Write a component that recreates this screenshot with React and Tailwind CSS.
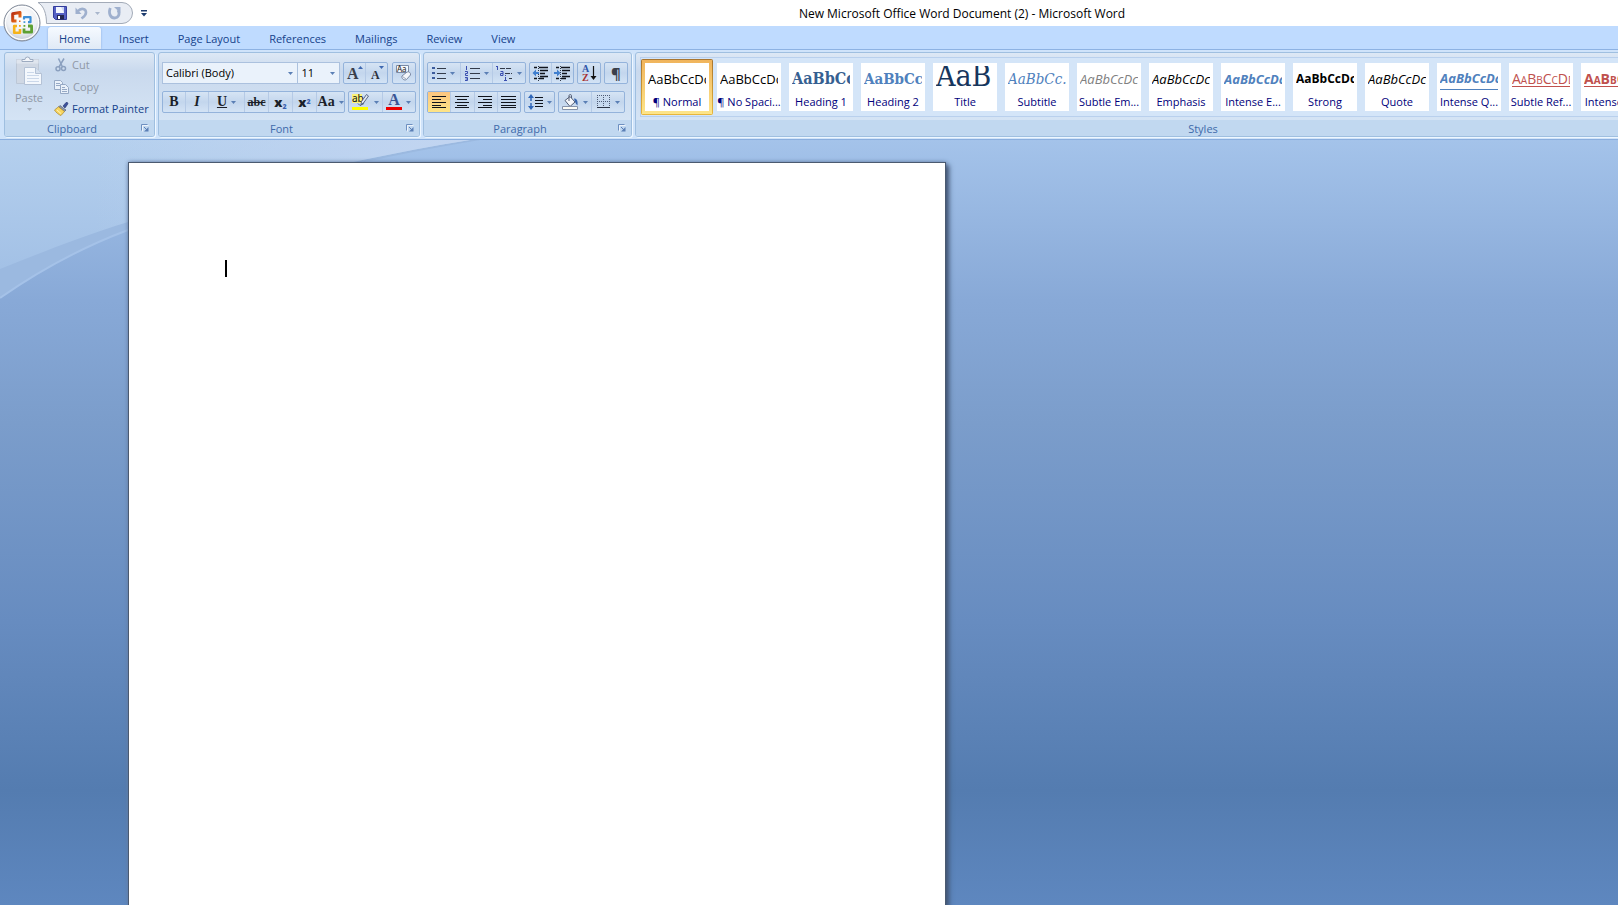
import { useState } from 'react';

const TABS = ['Home', 'Insert', 'Page Layout', 'References', 'Mailings', 'Review', 'View'];

const STYLES = [
  { name: '¶ Normal', sample: 'AaBbCcDc', look: 'text-[13px] leading-[22px] text-black' },
  { name: '¶ No Spaci...', sample: 'AaBbCcDc', look: 'text-[13px] leading-[22px] text-black' },
  { name: 'Heading 1', sample: 'AaBbCc', look: 'font-["DejaVu_Serif_Condensed","DejaVu_Serif",serif] font-bold text-[16px] leading-[22px] text-[#365f91]' },
  { name: 'Heading 2', sample: 'AaBbCc', look: 'font-["DejaVu_Serif_Condensed","DejaVu_Serif",serif] font-bold text-[15px] leading-[22px] text-[#4f81bd]' },
  { name: 'Title', sample: 'AaB', look: 'font-["DejaVu_Serif_Condensed","DejaVu_Serif",serif] text-[30px] leading-[28px] text-[#17365d]' },
  { name: 'Subtitle', sample: 'AaBbCc.', look: 'font-["DejaVu_Serif_Condensed","DejaVu_Serif",serif] italic text-[15px] leading-[22px] text-[#4f81bd]' },
  { name: 'Subtle Em...', sample: 'AaBbCcDc', look: 'italic text-[13px] leading-[22px] text-[#808080]' },
  { name: 'Emphasis', sample: 'AaBbCcDc', look: 'italic text-[13px] leading-[22px] text-black' },
  { name: 'Intense E...', sample: 'AaBbCcDc', look: 'italic font-bold text-[13px] leading-[22px] text-[#4f81bd]' },
  { name: 'Strong', sample: 'AaBbCcDc', look: 'font-bold text-[12px] leading-[22px] text-black' },
  { name: 'Quote', sample: 'AaBbCcDc', look: 'italic text-[13px] leading-[22px] text-black' },
  { name: 'Intense Q...', sample: 'AaBbCcDc', look: 'italic font-bold text-[13px] leading-[22px] text-[#4f81bd]', rule: true },
  { name: 'Subtle Ref...', sample: 'AaBbCcDd', look: '[font-variant:small-caps] underline underline-offset-2 text-[14px] leading-[22px] text-[#c0504d]' },
  { name: 'Intense R...', sample: 'AaBbCcDd', look: '[font-variant:small-caps] underline underline-offset-2 font-bold text-[14px] leading-[22px] text-[#c0504d]' },
];

function Caret({ className = 'text-[#5a7fb5]' }) {
  return (
    <svg width="5" height="3" viewBox="0 0 5 3" className={`shrink-0 ${className}`} fill="currentColor">
      <path d="M0 0h5L2.500 3z" />
    </svg>
  );
}

function OfficeLogo() {
  return (
    <svg width="38" height="38" viewBox="0 0 38 38">
      <defs>
        <radialGradient id="orb" cx="50%" cy="35%" r="70%">
          <stop offset="0" stopColor="#ffffff" />
          <stop offset="0.6" stopColor="#eef0f4" />
          <stop offset="1" stopColor="#b4bdcc" />
        </radialGradient>
        <linearGradient id="logoRed" x1="0" y1="0" x2="1" y2="1">
          <stop offset="0" stopColor="#b92d12" />
          <stop offset="1" stopColor="#f07a1c" />
        </linearGradient>
      </defs>
      <circle cx="19" cy="19" r="18" fill="url(#orb)" stroke="#7e8796" />
      <circle cx="19" cy="19" r="16.500" fill="none" stroke="#ffffff" strokeWidth="1.200" />
      <path d="M13.500 17H9.700V9.800l7.300-1.300v5" fill="none" stroke="url(#logoRed)" strokeWidth="3" strokeLinejoin="round" />
      <path d="M21 15.500v-2.300h6.500v5H25" fill="none" stroke="#3d8fd6" strokeWidth="2.200" strokeLinejoin="round" />
      <path d="M21 24.500v3.700h7.600V22H25" fill="none" stroke="#5da033" strokeWidth="2.800" strokeLinejoin="round" />
      <path d="M14 22h-2.800v6.800H17V25" fill="none" stroke="#f6b31a" strokeWidth="2.600" strokeLinejoin="round" />
      <path d="M16 16.500h1.500v1.500H16z" fill="#e8641c" />
      <path d="M20.500 17.200h1.800v1.800h-1.800z" fill="#4a98dc" />
      <path d="M16 21h1.800v1.800H16z" fill="#f2a21a" />
      <path d="M20.500 21h1.800v1.800h-1.800z" fill="#62a838" />
    </svg>
  );
}

function SaveIcon() {
  return (
    <svg width="14" height="14" viewBox="0 0 14 14">
      <path d="M0.500 0.500h13v13h-11l-2-2z" fill="#5560c4" stroke="#333c9c" />
      <path d="M3 1h8v6H3z" fill="#f3f6ff" />
      <path d="M8 1h3v6z" fill="#cdd6f4" />
      <path d="M4 9h7v4.500H4z" fill="#23264f" />
      <path d="M5 10h2v3H5z" fill="#ffffff" />
    </svg>
  );
}

function UndoIcon() {
  return (
    <svg width="13" height="14" viewBox="0 0 13 14" fill="none">
      <path d="M3 5C6 1.500 11 2.500 11 6.500c0 3-2.500 4.500-4.500 6" stroke="#9fb0ce" strokeWidth="2.600" />
      <path d="M0.500 1.500v6.500h6z" fill="#9fb0ce" />
    </svg>
  );
}

function RedoIcon() {
  return (
    <svg width="13" height="14" viewBox="0 0 13 14" fill="none">
      <path d="M2.300 2C0 8 3 12 6.500 12s6-3.500 3.500-8" stroke="#9fb0ce" strokeWidth="2.800" />
      <path d="M6 1h6.500v6z" fill="#9fb0ce" />
    </svg>
  );
}

function PasteIcon() {
  return (
    <svg width="28" height="30" viewBox="0 0 28 30">
      <path d="M1.500 3.500h22v24h-22z" fill="#d0d8e4" stroke="#bcc7d6" />
      <path d="M1.500 3.500h22v4h-22z" fill="#dfe5ee" />
      <path d="M7 5.500V3.500h3a2.500 2.500 0 0 1 5 0h3v2z" fill="#f2f5fa" stroke="#9dabc0" />
      <path d="M9.500 11.500h11l6 6v11h-17z" fill="#f4f8fd" stroke="#b4c2d6" />
      <path d="M20.500 11.500v6h6" fill="#d5e0ee" stroke="#b4c2d6" />
      <path d="M12 16.500h7M12 19.500h12M12 22.500h12M12 25.500h12" stroke="#cbd8ea" />
    </svg>
  );
}

function CutIcon() {
  return (
    <svg width="14" height="14" viewBox="0 0 14 14" fill="none" stroke="#8ba0bf">
      <path d="M4.500 0.500L8.500 9M10 0.500L5 9" strokeWidth="1.500" />
      <circle cx="4" cy="10.800" r="2" strokeWidth="1.500" />
      <circle cx="9.500" cy="10.500" r="2" strokeWidth="1.500" />
    </svg>
  );
}

function CopyIcon() {
  return (
    <svg width="15" height="14" viewBox="0 0 15 14" fill="#eaf1fa" stroke="#96a9c5">
      <path d="M0.500 0.500h6l2 2v7h-8z" />
      <path d="M2 3.500h4M2 5.500h4" />
      <path d="M6.500 4.500h5l3 3v6h-8z" />
      <path d="M8 7.500h3M8 9.500h5M8 11.500h5" />
    </svg>
  );
}

function BrushIcon() {
  return (
    <svg width="15" height="14" viewBox="0 0 15 14">
      <path d="M9 4l3-3.500c1-.8 2.500.6 1.700 1.700L11 6z" fill="#3a4f9a" stroke="#273570" strokeWidth=".6" />
      <path d="M6 3.500l6 4.500-1.500 1.500L4.500 5z" fill="#8b96ad" stroke="#4d5568" strokeWidth=".6" />
      <path d="M4.500 4.800l6 4.700L7 13.500C5 13 1.500 10 .5 8z" fill="#f7d560" stroke="#a8842a" strokeWidth=".7" />
      <path d="M3 8l4 3.500" stroke="#fff3b8" />
    </svg>
  );
}

function LauncherIcon() {
  return (
    <svg width="8" height="8" viewBox="0 0 8 8" fill="none">
      <path d="M1.500 7.500v-6h6" stroke="#ffffff" opacity=".7" />
      <path d="M0.500 6.500v-6h6" stroke="#6d8fc0" />
      <path d="M3 3l3 3" stroke="#5b7fb5" />
      <path d="M7.500 3v4.500H3z" fill="#5b7fb5" />
    </svg>
  );
}

function GrowFontIcon() {
  return (
    <svg width="18" height="18" viewBox="0 0 18 18">
      <text x="1" y="15" fontSize="16" fontWeight="bold" fontFamily="Liberation Serif" fill="#3a3f4a">A</text>
      <path d="M12 5h5l-2.500-3z" fill="#3f68b0" />
    </svg>
  );
}

function ShrinkFontIcon() {
  return (
    <svg width="18" height="18" viewBox="0 0 18 18">
      <text x="3" y="15" fontSize="12" fontWeight="bold" fontFamily="Liberation Serif" fill="#2c313c">A</text>
      <path d="M11 2h5l-2.500 3z" fill="#3f68b0" />
    </svg>
  );
}

function ClearIcon() {
  return (
    <svg width="18" height="18" viewBox="0 0 18 18">
      <path d="M1.500 1.500h12v7h-12z" fill="#f6f9fd" stroke="#7b8ba6" />
      <text x="2" y="8" fontSize="8" fontFamily="Noto Sans" fill="#222">Aa</text>
      <path d="M7 12l5-4c2-.8 4 1 3.500 3l-4 4.500c-2 1.500-5.500-1-4.500-3.500z" fill="#f4f6fa" stroke="#6f7f9b" strokeWidth=".9" />
      <path d="M7.500 12.500l3.500 2.500" stroke="#9aa7be" />
    </svg>
  );
}

function HighlightIcon() {
  return (
    <svg width="18" height="18" viewBox="0 0 18 18">
      <path d="M0 1h10v9H0z" fill="#fbf37a" />
      <text x="0" y="9" fontSize="10" fontFamily="Noto Sans" fill="#111">ab</text>
      <path d="M14.500 1.500l2 1.500-5 7-2.500 1.500.500-3z" fill="#e4e9f2" stroke="#4b5a78" strokeWidth=".9" />
      <path d="M6 10.500l2 2 4-2" stroke="#4b5a78" fill="none" />
      <path d="M0 14h16v3H0z" fill="#ffff00" />
    </svg>
  );
}

function FontColorIcon() {
  return (
    <svg width="16" height="18" viewBox="0 0 16 18">
      <text x="8" y="12" fontSize="16" fontWeight="bold" textAnchor="middle" fontFamily="Liberation Serif" fill="#3a5596">A</text>
      <path d="M0 14h16v3H0z" fill="#ee0000" />
    </svg>
  );
}

function BulletsIcon() {
  return (
    <svg width="14" height="14" viewBox="0 0 14 14">
      <path d="M0 1h3v2H0zM0 6h3v2H0zM0 11h3v2H0z" fill="#3d5c9c" />
      <path d="M5 2.500h9M5 7.500h9M5 12.500h9" stroke="#333b4a" />
    </svg>
  );
}

function NumberingIcon() {
  return (
    <svg width="15" height="15" viewBox="0 0 15 15">
      <path d="M1.500 0v4M0 5.500h2.500v2H.5v2h2.500M0 11.500h2.500v3H0M0.500 13h2" fill="none" stroke="#3a4fb0" />
      <path d="M5 2.500h10M5 7.500h10M5 12.500h10" stroke="#333b4a" />
    </svg>
  );
}

function MultilevelIcon() {
  return (
    <svg width="17" height="15" viewBox="0 0 17 15">
      <path d="M1.500 0v4M0 .5h1.500M4.500 5.500h2.500v4H4.500v-2H7M9.500 11v3M8 14.500h3M9.500 9v1" fill="none" stroke="#3a4fb0" />
      <path d="M4 2.500h11M9 7.500h7M13 12.500h3" stroke="#333b4a" strokeDasharray="5 1" />
    </svg>
  );
}

function IndentIcon({ increase }) {
  return (
    <svg width="17" height="15" viewBox="0 0 17 15">
      <path d="M2 1.500h3M7 1.500h9M8 4.500h8M8 7.500h5M8 10.500h8M2 12.500h3M7 12.500h5" stroke="#10141c" strokeWidth="1.600" />
      <path d="M6.500 0v15" stroke="#333b4a" strokeDasharray="1 1" />
      <path d={increase ? 'M0 6h3V3.500l3.500 3.500L3 10.500V8H0z' : 'M7 6H4V3.500L.5 7 4 10.500V8h3z'} fill="#3f7fcf" />
    </svg>
  );
}

function SortIcon() {
  return (
    <svg width="17" height="18" viewBox="0 0 17 18">
      <text x="1" y="8" fontSize="10" fontWeight="bold" fontFamily="Liberation Serif" fill="#2f55a8">A</text>
      <text x="1" y="17" fontSize="10" fontWeight="bold" fontFamily="Liberation Serif" fill="#a83232">Z</text>
      <path d="M12.500 2v11" stroke="#111" strokeWidth="1.200" />
      <path d="M9.500 12h6l-3 4z" fill="#111" />
    </svg>
  );
}

function AlignIcon({ kind }) {
  const lines = {
    left: 'M0 .5h14M0 3.500h9M0 6.500h14M0 9.500h9M0 11.500h14',
    center: 'M0 .5h14M2 3.500h10M0 6.500h14M2 9.500h10M0 11.500h14',
    right: 'M0 .5h14M5 3.500h9M0 6.500h14M5 9.500h9M0 11.500h14',
    justify: 'M0 .5h15M0 3.500h15M0 6.500h15M0 9.500h15M0 11.500h15',
  };
  return (
    <svg width="15" height="12" viewBox="0 0 15 12" stroke="#10141c" strokeWidth="1.200">
      <path d={lines[kind]} />
    </svg>
  );
}

function SpacingIcon() {
  return (
    <svg width="15" height="16" viewBox="0 0 15 16">
      <path d="M3 0l3 4H0zM3 16l3-4H0z" fill="#2f66b8" />
      <path d="M3 3v4M3 9v4" stroke="#2f66b8" strokeWidth="1.500" />
      <path d="M7 3.500h8M7 6.500h8M7 9.500h8M7 12.500h8" stroke="#10141c" />
    </svg>
  );
}

function ShadingIcon() {
  return (
    <svg width="17" height="16" viewBox="0 0 17 16">
      <path d="M3 6.500l5-4 5 5.500-5 4.500z" fill="#f4f6fa" stroke="#545f76" />
      <path d="M7 7V1.500c0-1.200 2.500-1.200 2.500 0V4" fill="none" stroke="#545f76" />
      <path d="M12 4.500c3 0 4 2.500 3.500 7-1.500-1-2-3-2.500-3.500z" fill="#3a66ae" />
      <path d="M0.500 12.500h15v3h-15z" fill="#fdfdf6" stroke="#8592aa" />
    </svg>
  );
}

function BordersIcon() {
  return (
    <svg width="14" height="14" viewBox="0 0 14 14" fill="none" stroke="#4e5c76">
      <path d="M0.500 0v12M6.500 0v12M12.500 0v12M0 .5h13M0 6.500h13" strokeDasharray="1 1" />
      <path d="M0 12.500h13" stroke="#2b3446" />
    </svg>
  );
}

function Group({ label, className = '', launcher = true, children }) {
  return (
    <section
      aria-label={label}
      className={`flex h-[85px] shrink-0 flex-col overflow-hidden rounded-[3px] border border-[#9fbfe0] bg-linear-to-b from-[#dde8f5] from-0% via-[#c9d9ed] via-22% to-[#d8e7f7] to-100% shadow-[1px_1px_0_#eef7ff] ${className}`}
    >
      <div className="flex-1">{children}</div>
      <div className="flex h-[16px] items-center bg-[#c1d8f0] text-[11px] leading-[15px] text-[#3e6aaa]">
        <span className="flex-1 pt-px text-center">{label}</span>
        {launcher && (
          <button type="button" aria-label={`${label} options`} className="mr-[3px] flex h-3 w-3 items-center justify-center">
            <LauncherIcon />
          </button>
        )}
      </div>
    </section>
  );
}

function ButtonStrip({ className = '', children }) {
  return (
    <div className={`flex h-[22px] divide-x divide-[#b5cae6] rounded-[2px] border border-[#94b3db] bg-linear-to-b from-[#d6e4f4] from-0% via-[#c3d6ed] via-50% to-[#d3e3f5] to-100% ${className}`}>
      {children}
    </div>
  );
}

function Tool({ label, active, caret, className = 'flex-1', children }) {
  return (
    <button
      type="button"
      aria-label={label}
      className={`flex items-center justify-center gap-1 ${active ? 'bg-linear-to-b from-[#fbc580] to-[#fde486]' : ''} ${className}`}
    >
      {children}
      {caret && <Caret />}
    </button>
  );
}

function ComboBox({ label, value, options, onChange, className }) {
  return (
    <div className={`relative flex h-[22px] items-center border border-[#abc1de] bg-[#eaf2fb] ${className}`}>
      <select
        aria-label={label}
        value={value}
        onChange={(e) => onChange(e.target.value)}
        className="h-full w-full appearance-none bg-transparent pl-[3px] pt-px text-[11px] text-black outline-none"
      >
        {options.map((o) => <option key={o}>{o}</option>)}
      </select>
      <Caret className="pointer-events-none absolute right-1 text-[#5a7fb5]" />
    </div>
  );
}

function ClipboardGroup() {
  return (
    <Group label="Clipboard" className="w-[151px]">
      <div className="flex pt-px text-[11px]">
        <button type="button" className="ml-[3px] flex w-[42px] flex-col items-center pt-[2px] text-[#8f98a6]">
          <PasteIcon />
          <span className="mt-[4px] leading-4">Paste</span>
          <Caret className="mt-[2px] text-[#a3adbb]" />
        </button>
        <div className="ml-1 flex flex-col">
          <button type="button" className="flex h-[22px] items-center gap-1 text-[#8f98a6]">
            <CutIcon />Cut
          </button>
          <button type="button" className="flex h-[22px] items-center gap-1 text-[#8f98a6]">
            <CopyIcon />Copy
          </button>
          <button type="button" className="flex h-[22px] items-center gap-[3px] whitespace-nowrap text-[#15428b]">
            <BrushIcon />Format Painter
          </button>
        </div>
      </div>
    </Group>
  );
}

function FontGroup() {
  const [font, setFont] = useState('Calibri (Body)');
  const [size, setSize] = useState('11');

  return (
    <Group label="Font" className="w-[262px]">
      <div className="flex flex-col gap-[7px] px-[3px] pt-[9px]">
        <div className="flex">
          <ComboBox label="Font" value={font} onChange={setFont} options={['Calibri (Body)', 'Cambria (Headings)']} className="w-[137px]" />
          <ComboBox label="Font size" value={size} onChange={setSize} options={['10', '11', '12']} className="w-[42px] border-l-0" />
          <ButtonStrip className="ml-[3px] w-[45px]">
            <Tool label="Grow font"><GrowFontIcon /></Tool>
            <Tool label="Shrink font"><ShrinkFontIcon /></Tool>
          </ButtonStrip>
          <ButtonStrip className="ml-[4px] w-[24px]">
            <Tool label="Clear formatting"><ClearIcon /></Tool>
          </ButtonStrip>
        </div>
        <div className='flex font-["Liberation_Serif",serif] text-[#1b1f29]'>
          <ButtonStrip className="w-[184px]">
            <Tool label="Bold" className="w-[23px]"><b className="text-[14px] leading-5">B</b></Tool>
            <Tool label="Italic" className="w-[23px]"><i className="text-[14px] font-bold leading-5">I</i></Tool>
            <Tool label="Underline" caret className="w-[36px]"><b className="text-[14px] leading-5 underline">U</b></Tool>
            <Tool label="Strikethrough" className="w-[24px]"><b className="text-[12px] leading-5 line-through">abc</b></Tool>
            <Tool label="Subscript" className="w-[24px]">
              <span className='font-["Noto_Sans",sans-serif] text-[13px] font-black leading-4'>x<sub className="text-[7px] text-[#3a62b0]">2</sub></span>
            </Tool>
            <Tool label="Superscript" className="w-[24px]">
              <span className='font-["Noto_Sans",sans-serif] text-[13px] font-black leading-4'>x<sup className="text-[7px] text-[#3a62b0]">2</sup></span>
            </Tool>
            <Tool label="Change case" caret><b className="text-[14px] leading-5">Aa</b></Tool>
          </ButtonStrip>
          <ButtonStrip className="ml-[3px] w-[68px]">
            <Tool label="Highlight" caret><HighlightIcon /></Tool>
            <Tool label="Font color" caret><FontColorIcon /></Tool>
          </ButtonStrip>
        </div>
      </div>
    </Group>
  );
}

function ParagraphGroup() {
  return (
    <Group label="Paragraph" className="w-[209px]">
      <div className="flex flex-col gap-[7px] px-[3px] pt-[9px]">
        <div className="flex gap-[3px]">
          <ButtonStrip className="w-[99px]">
            <Tool label="Bullets" caret><BulletsIcon /></Tool>
            <Tool label="Numbering" caret><NumberingIcon /></Tool>
            <Tool label="Multilevel list" caret><MultilevelIcon /></Tool>
          </ButtonStrip>
          <ButtonStrip className="w-[45px]">
            <Tool label="Decrease indent"><IndentIcon /></Tool>
            <Tool label="Increase indent"><IndentIcon increase /></Tool>
          </ButtonStrip>
          <ButtonStrip className="w-[24px]">
            <Tool label="Sort"><SortIcon /></Tool>
          </ButtonStrip>
          <ButtonStrip className="w-[24px]">
            <Tool label="Show marks"><span className="text-[15px] font-bold leading-5 text-[#3a3f4a]">¶</span></Tool>
          </ButtonStrip>
        </div>
        <div className="flex gap-[3px]">
          <ButtonStrip className="w-[94px]">
            <Tool label="Align left" active><AlignIcon kind="left" /></Tool>
            <Tool label="Center"><AlignIcon kind="center" /></Tool>
            <Tool label="Align right"><AlignIcon kind="right" /></Tool>
            <Tool label="Justify"><AlignIcon kind="justify" /></Tool>
          </ButtonStrip>
          <ButtonStrip className="w-[31px]">
            <Tool label="Line spacing" caret><SpacingIcon /></Tool>
          </ButtonStrip>
          <ButtonStrip className="w-[67px]">
            <Tool label="Shading" caret><ShadingIcon /></Tool>
            <Tool label="Borders" caret><BordersIcon /></Tool>
          </ButtonStrip>
        </div>
      </div>
    </Group>
  );
}

function StyleTile({ style, selected, onSelect }) {
  return (
    <button
      type="button"
      onClick={onSelect}
      className={`flex h-14 w-[72px] shrink-0 rounded-[2px] p-px ${selected ? 'bg-linear-to-b from-[#a8752f] to-[#e8b63c]' : ''}`}
    >
      <span className={`flex h-full w-full p-[3px] ${selected ? 'bg-linear-to-b from-[#f0b45c] to-[#fde58a]' : ''}`}>
        <span className="flex h-12 w-full flex-col bg-white">
          <span className={`mx-[3px] mt-[3px] flex h-[24px] items-end overflow-hidden whitespace-nowrap ${style.rule ? 'border-b border-[#4f81bd]' : ''} ${style.look}`}>
            {style.sample}
          </span>
          <span className="mt-1 whitespace-nowrap text-center text-[11px] leading-4 text-[#00007b]">{style.name}</span>
        </span>
      </span>
    </button>
  );
}

function StylesGroup() {
  const [selected, setSelected] = useState(STYLES[0].name);

  return (
    <Group label="Styles" className="w-[1151px]">
      <div className="ml-1 mt-1 flex h-[60px] items-center overflow-hidden border border-[#b9d0ed] bg-[#d4e5f8]">
        {STYLES.map((s) => (
          <StyleTile key={s.name} style={s} selected={s.name === selected} onSelect={() => setSelected(s.name)} />
        ))}
      </div>
    </Group>
  );
}

function TitleBar() {
  return (
    <header className="relative flex h-[26px] items-center bg-white">
      <div className="relative ml-[38px] flex h-[26px] w-[96px] items-center">
        <svg className="absolute inset-0" width="96" height="26" viewBox="0 0 96 26">
          <path d="M0 2.500h84a10.500 10.500 0 0 1 0 21H8.500C8.500 14 6 6 0 2.500z" fill="#e9edf4" stroke="#a3abb8" />
        </svg>
        <div className="relative ml-[15px] flex items-center">
          <button type="button" aria-label="Save"><SaveIcon /></button>
          <button type="button" aria-label="Undo" className="ml-2 flex items-center gap-[7px]">
            <UndoIcon />
            <Caret className="text-[#a9b6cc]" />
          </button>
          <button type="button" aria-label="Redo" className="ml-2"><RedoIcon /></button>
        </div>
      </div>
      <button type="button" aria-label="Customize toolbar" className="ml-[7px]">
        <svg width="6" height="7" viewBox="0 0 6 7" fill="#1e3c6e">
          <path d="M0 0h6v1.500H0zM0 3h6L3 6.500z" />
        </svg>
      </button>
      <h1 className="absolute inset-x-0 top-[6px] pl-[306px] text-center text-[12px] leading-4 text-black">
        New Microsoft Office Word Document (2) - Microsoft Word
      </h1>
      <button type="button" aria-label="Office menu" className="absolute left-[3px] top-1 z-10">
        <OfficeLogo />
      </button>
    </header>
  );
}

export default function App() {
  const [tab, setTab] = useState('Home');

  return (
    <div className='flex min-h-screen flex-col overflow-hidden bg-[#bfdbff] font-["Open_Sans","Noto_Sans",sans-serif]'>
      <TitleBar />

      <nav className="flex h-[24px] items-end gap-[7px] border-b border-[#8db2e3] bg-[#bfdbff] pl-12 text-[11px] text-[#15428b]">
        {TABS.map((t) => (
          <button
            key={t}
            type="button"
            onClick={() => setTab(t)}
            className={`h-[22px] whitespace-nowrap rounded-t-[3px] px-[11px] pt-[2px] ${t === tab ? 'bg-linear-to-b from-[#f6faff] to-[#e0eaf6] shadow-[0_0_2px_#7fa3d6]' : ''}`}
          >
            {t}
          </button>
        ))}
      </nav>

      <div className="overflow-hidden border-b border-[#8aaede] bg-[#cfe3fa] px-1 pb-[2px] pt-[2px]">
        <div className="flex gap-[3px]">
          <ClipboardGroup />
          <FontGroup />
          <ParagraphGroup />
          <StylesGroup />
        </div>
      </div>

      <main className="relative flex flex-1 flex-col bg-[linear-gradient(#a4c3ea_0%,#88a9d7_21%,#7b9dcb_37%,#678cc0_63%,#547cb0_85%,#5e87bf_100%)] pl-[128px] pt-[22px]">
        {/* Light swoosh behind the sheet */}
        <svg className="absolute left-0 top-0" width="480" height="160" viewBox="0 0 480 160">
          <defs>
            <linearGradient id="swoosh" x1="0" y1="0" x2="0" y2="1">
              <stop offset="0" stopColor="#b5d0ee" />
              <stop offset="1" stopColor="#a3c1e6" />
            </linearGradient>
            <linearGradient id="sheen" x1="0" y1="0" x2="1" y2="0">
              <stop offset="0.2" stopColor="#c2d5f1" stopOpacity="0" />
              <stop offset="1" stopColor="#c2d5f1" />
            </linearGradient>
          </defs>
          <path d="M0 0H480C345 22 230 54 128 90 80 108 40 130 0 158z" fill="#9bb9e0" />
          <path d="M0 158C40 130 80 108 128 90" fill="none" stroke="#a5c2e8" strokeWidth="2" />
          <path d="M0 0H470C345 20 210 54 128 82 80 97 40 113 0 129z" fill="url(#swoosh)" />
          <path d="M0 0H470C345 20 210 54 128 82 80 97 40 113 0 129z" fill="url(#sheen)" />
        </svg>
        <article className="relative w-[818px] flex-1 border border-b-0 border-[#4b5a70] bg-white pl-[96px] pt-[97px] shadow-[3px_3px_5px_#3f5270,0_0_4px_#6d86ad]">
          <div className="h-[17px] w-[2px] bg-black" />
        </article>
      </main>
    </div>
  );
}
